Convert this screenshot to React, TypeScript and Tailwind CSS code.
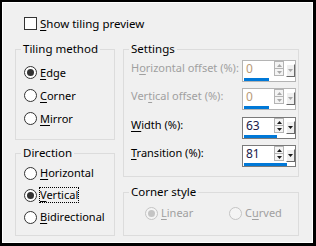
import clsx from "clsx";
import type { ReactNode } from "react";

function Key({ text, at }: { text: string; at: number }) {
  return (
    <>
      {text.slice(0, at)}
      <span className="underline decoration-1 underline-offset-2">{text[at]}</span>
      {text.slice(at + 1)}
    </>
  );
}

function Radio({ checked, disabled }: { checked?: boolean; disabled?: boolean }) {
  return (
    <span
      className={clsx(
        "flex h-[13px] w-[13px] shrink-0 items-center justify-center rounded-full border",
        disabled ? "border-[#c4c4c4] bg-[#f4f4f4]" : "border-[#333] bg-white"
      )}
    >
      {checked && (
        <span className={clsx("h-[7px] w-[7px] rounded-full", disabled ? "bg-[#c4c4c4]" : "bg-[#333]")} />
      )}
    </span>
  );
}

function Option(props: {
  text: string;
  at: number;
  checked?: boolean;
  disabled?: boolean;
  focus?: boolean;
  className?: string;
}) {
  return (
    <div className={clsx("flex items-center gap-[3px]", props.className)}>
      <Radio checked={props.checked} disabled={props.disabled} />
      <span
        className={clsx(
          "whitespace-nowrap leading-[14px]",
          props.disabled ? "text-[#a0a0a0]" : "text-black",
          props.focus && "outline outline-1 outline-dotted outline-black"
        )}
      >
        <Key text={props.text} at={props.at} />
      </span>
    </div>
  );
}

function Group({ title, className, children }: { title: string; className?: string; children: ReactNode }) {
  return (
    <fieldset className={clsx("border border-[#dcdcdc]", className)}>
      <legend className="ml-[5px] px-[2px] text-[11.5px] leading-4 text-black">{title}</legend>
      {children}
    </fieldset>
  );
}

function Arrow({ up, color }: { up?: boolean; color: string }) {
  return (
    <svg width="5" height="3" viewBox="0 0 5 3">
      <polygon points={up ? "0,3 5,3 2.5,0" : "0,0 5,0 2.5,3"} fill={color} />
    </svg>
  );
}

function Spin({ value, bar, disabled }: { value: string; bar: number; disabled?: boolean }) {
  const arrow = disabled ? "#a8a8a8" : "#1a1a1a";
  return (
    <div
      className={clsx(
        "flex h-[22px] w-[54px] shrink-0 flex-col border bg-white",
        disabled ? "border-[#b4b4b4]" : "border-[#7a7a7a]"
      )}
    >
      <div className="flex h-[16px]">
        <span
          className={clsx(
            "flex-1 pl-[3px] text-[12px] leading-[16px]",
            disabled ? "text-[#b99a78]" : "text-[#20204a]"
          )}
        >
          {value}
        </span>
        <div className="flex w-[10px] flex-col">
          <div className="flex h-[8px] items-center justify-center border border-[#b4b4b4] bg-[#f4f4f4]">
            <Arrow up color={arrow} />
          </div>
          <div className="-mt-px flex h-[8px] items-center justify-center border border-[#b4b4b4] bg-[#f4f4f4]">
            <Arrow color={arrow} />
          </div>
        </div>
        <div className="ml-[2px] flex h-[13px] w-[9px] items-center justify-center self-end border border-t-white border-l-white border-r-[#696969] border-b-[#696969] bg-[#f0f0f0]">
          <Arrow color={arrow} />
        </div>
      </div>
      <div className="ml-px mt-px h-[3px] bg-[#0078d7]" style={{ width: bar }} />
    </div>
  );
}

function Row({ label, at, value, bar, disabled, className }: {
  label: string;
  at: number;
  value: string;
  bar: number;
  disabled?: boolean;
  className?: string;
}) {
  return (
    <div className={clsx("flex items-start", className)}>
      <span
        className={clsx(
          "w-[111px] whitespace-nowrap leading-[15px]",
          disabled ? "text-[#a0a0a0]" : "text-black"
        )}
      >
        <Key text={label} at={at} />
      </span>
      <Spin value={value} bar={bar} disabled={disabled} />
    </div>
  );
}

export default function App() {
  return (
    <div className="h-[246px] w-[316px] border-t-2 border-l-2 border-r-[3px] border-b-[3px] border-black font-['Noto_Sans',sans-serif] text-[11px]">
      <div className="h-full border border-white bg-[#f0f0f0] pl-[12px] pt-[13px]">
        <div className="ml-[9px] flex h-[15px] items-center gap-[3px]">
          <span className="h-[13px] w-[13px] border border-[#333] bg-white" />
          <span className="text-[11.5px] leading-[14px] text-black">
            <Key text="Show tiling preview" at={0} />
          </span>
        </div>

        <div className="mt-[10px] flex gap-[8px]">
          <div className="flex w-[100px] flex-col gap-[5px]">
            <Group title="Tiling method" className="h-[99px]">
              <div className="pl-[8px] pt-[4px]">
                <Option text="Edge" at={0} checked className="h-[23px]" />
                <Option text="Corner" at={0} className="h-[23px]" />
                <Option text="Mirror" at={0} className="h-[23px]" />
              </div>
            </Group>
            <Group title="Direction" className="h-[91px]">
              <div className="pl-[8px] pt-[1px]">
                <Option text="Horizontal" at={0} className="h-[22px]" />
                <Option text="Vertical" at={0} checked focus className="h-[22px]" />
                <Option text="Bidirectional" at={0} className="h-[22px]" />
              </div>
            </Group>
          </div>

          <div className="flex w-[176px] flex-col gap-[7px]">
            <Group title="Settings" className="h-[136px]">
              <div className="pl-[7px] pt-[3px]">
                <Row label="Horizontal offset (%):" at={1} value="0" bar={25} disabled className="h-[28px]" />
                <Row label="Vertical offset (%):" at={3} value="0" bar={25} disabled className="h-[29px]" />
                <Row label="Width (%):" at={0} value="63" bar={33} className="h-[28px]" />
                <Row label="Transition (%):" at={0} value="81" bar={43} />
              </div>
            </Group>
            <Group title="Corner style" className="h-[52px]">
              <div className="mt-[5px] flex pl-[21px]">
                <Option text="Linear" at={0} checked disabled className="h-[16px] w-[84px]" />
                <Option text="Curved" at={1} disabled className="h-[16px]" />
              </div>
            </Group>
          </div>
        </div>
      </div>
    </div>
  );
}
